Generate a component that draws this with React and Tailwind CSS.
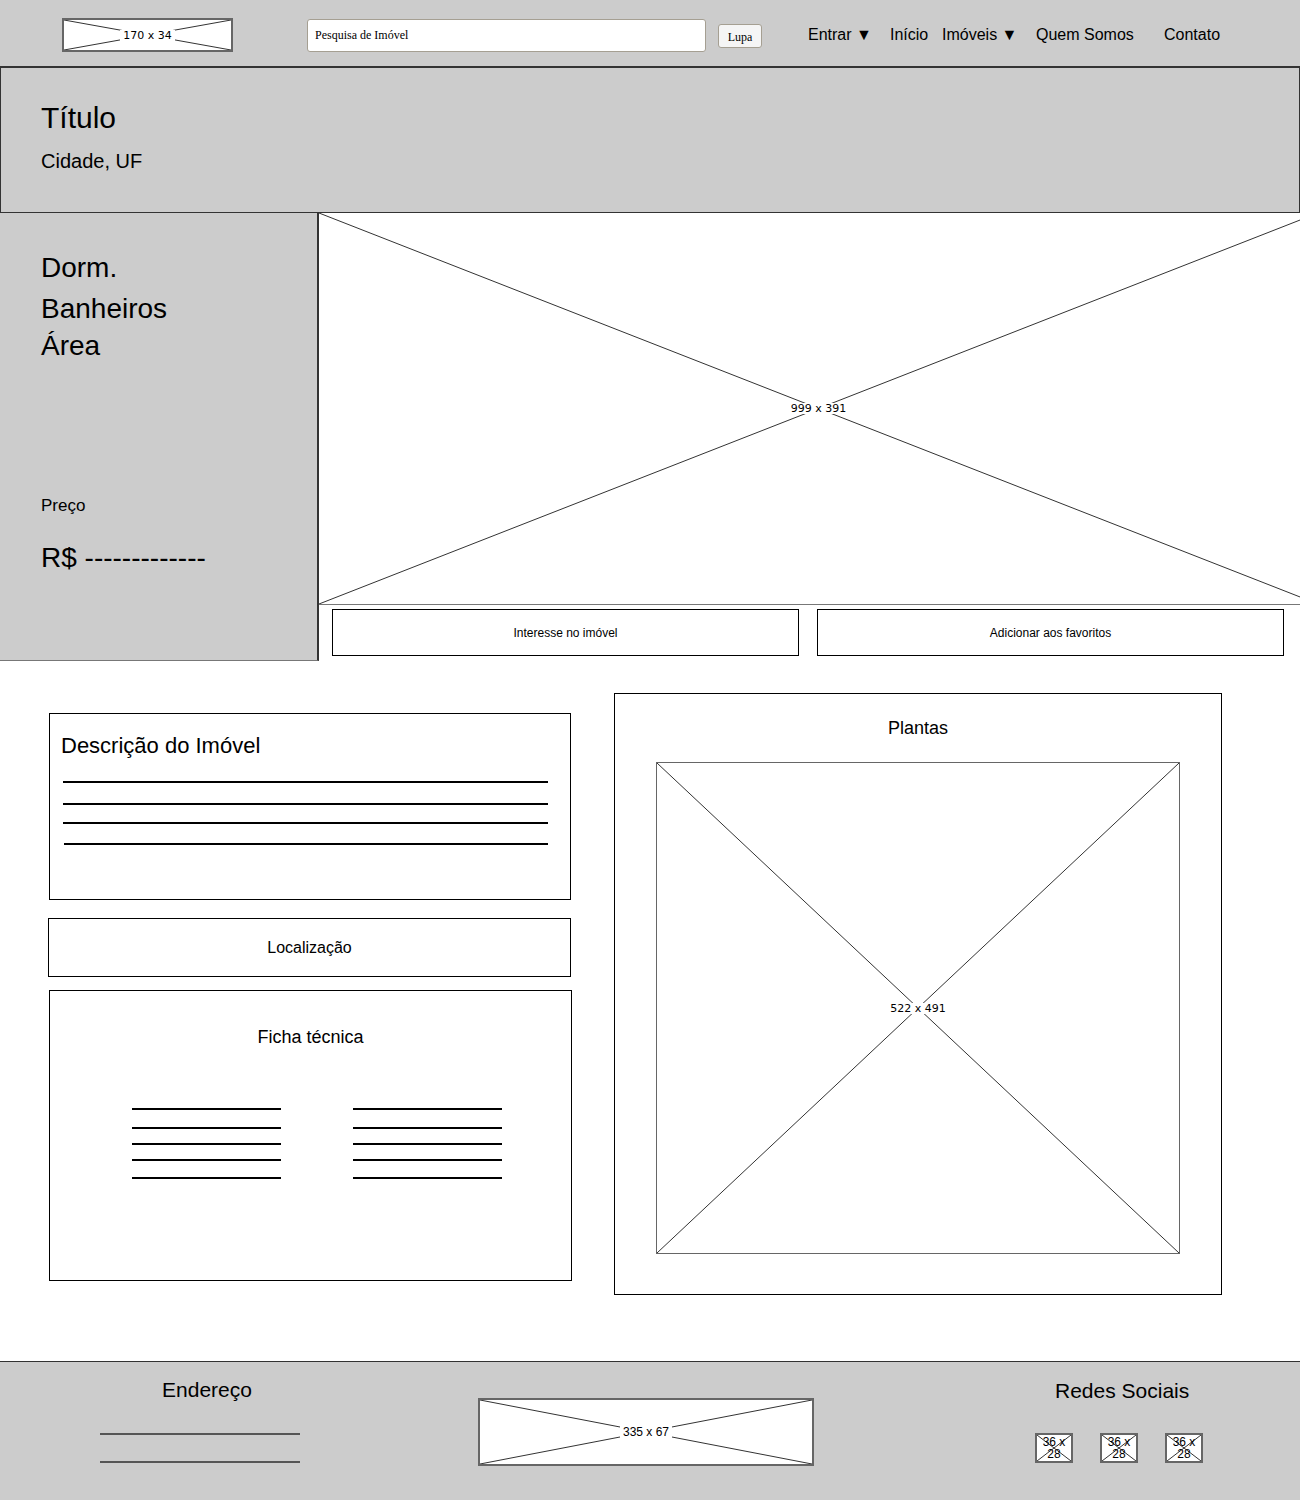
import React from 'react';

const Placeholder = ({ label, className = '', labelClass = 'text-[12px]', stroke = '#333' }) => (
  <div className={`relative bg-white ${className}`}>
    <svg className="absolute inset-0 h-full w-full">
      <line x1="0" y1="0" x2="100%" y2="100%" stroke={stroke} strokeWidth="1" />
      <line x1="100%" y1="0" x2="0" y2="100%" stroke={stroke} strokeWidth="1" />
    </svg>
    <div className="absolute inset-0 flex items-center justify-center">
      <span className={`bg-white px-[3px] leading-none text-black ${labelClass}`}>{label}</span>
    </div>
  </div>
);

const Rule = ({ className = '' }) => <div className={`h-[2px] bg-black ${className}`} />;

const App = () => {
  const font = { fontFamily: '"Liberation Sans", Arial, sans-serif' };

  return (
    <div className="w-[1300px] h-[1500px] bg-white text-black overflow-hidden" style={font}>
      {/* Header */}
      <header className="h-[68px] bg-[#cccccc] border-b-2 border-[#333] flex items-center pt-[4px]">
        <Placeholder
          label="170 x 34"
          className="ml-[62px] w-[171px] h-[34px] border-2 border-[#666]"
          labelClass="text-[11px] font-['DejaVu_Sans']"
        />
        <input
          readOnly
          placeholder="Pesquisa de Imóvel"
          className="ml-[74px] w-[399px] h-[33px] bg-white border border-[#a59f92] rounded-[3px] pl-[7px] text-[12px] placeholder:text-black outline-none"
          style={{ fontFamily: '"Liberation Serif", "Times New Roman", serif' }}
        />
        <button
          className="ml-[12px] mt-[2px] w-[44px] h-[24px] bg-[#f5f5f5] border border-[#a59f92] rounded-[3px] text-[12px] pt-[2px]"
          style={{ fontFamily: '"Liberation Serif", "Times New Roman", serif' }}
        >
          Lupa
        </button>
        <nav className="ml-[46px] flex items-center text-[16px]">
          <span className="w-[82px]">Entrar ▼</span>
          <span className="w-[52px]">Início</span>
          <span className="w-[94px]">Imóveis ▼</span>
          <span className="w-[128px]">Quem Somos</span>
          <span>Contato</span>
        </nav>
      </header>

      {/* Title */}
      <section className="h-[145px] bg-[#cccccc] border-x border-b border-[#333] pl-[40px] pt-[32px]">
        <h1 className="text-[30px] leading-[36px]">Título</h1>
        <p className="mt-[13px] text-[20px] leading-[24px]">Cidade, UF</p>
      </section>

      {/* Main */}
      <section className="flex h-[448px]">
        <aside className="w-[319px] shrink-0 bg-[#cccccc] border-r-2 border-b border-r-[#333] border-b-[#777] pl-[41px] pt-[39px] flex flex-col">
          <div className="text-[28px] leading-[32px]">Dorm.</div>
          <div className="mt-[9px] text-[28px] leading-[32px]">Banheiros</div>
          <div className="mt-[5px] text-[28px] leading-[32px]">Área</div>
          <div className="mt-[134px] text-[17px] leading-[20px]">Preço</div>
          <div className="mt-[26px] text-[28px] leading-[32px]">R$ -------------</div>
        </aside>
        <div className="flex-1 flex flex-col overflow-hidden">
          <Placeholder
            label="999 x 391"
            className="w-[999px] shrink-0 h-[392px] border-b border-[#777]"
            labelClass="text-[11px] font-['DejaVu_Sans']"
          />
          <div className="mt-[4px] ml-[13px] flex gap-[18px]">
            <button className="w-[467px] h-[47px] border border-black bg-white text-[12px]">
              Interesse no imóvel
            </button>
            <button className="w-[467px] h-[47px] border border-black bg-white text-[12px]">
              Adicionar aos favoritos
            </button>
          </div>
        </div>
      </section>

      {/* Details */}
      <section className="h-[700px] flex items-start">
        <div className="ml-[48px] w-[524px] flex flex-col">
          <div className="mt-[52px] ml-[1px] w-[522px] h-[187px] border border-black pl-[11px] pt-[19px]">
            <h2 className="text-[22px] leading-[26px]">Descrição do Imóvel</h2>
            <div className="pl-[2px] w-[487px]">
              <Rule className="mt-[22px]" />
              <Rule className="mt-[20px]" />
              <Rule className="mt-[17px]" />
              <Rule className="mt-[19px] ml-[1px]" />
            </div>
          </div>
          <div className="mt-[18px] w-[523px] h-[59px] border border-black flex items-center justify-center text-[16px]">
            Localização
          </div>
          <div className="mt-[13px] ml-[1px] w-[523px] h-[291px] border border-black pt-[35px]">
            <h3 className="text-center text-[18px] leading-[22px]">Ficha técnica</h3>
            <div className="mt-[60px] ml-[82px] flex gap-[72px]">
              {[0, 1].map((c) => (
                <div key={c} className="w-[149px]">
                  <Rule />
                  <Rule className="mt-[17px]" />
                  <Rule className="mt-[14px]" />
                  <Rule className="mt-[14px]" />
                  <Rule className="mt-[16px]" />
                </div>
              ))}
            </div>
          </div>
        </div>
        <div className="mt-[32px] ml-[42px] w-[608px] h-[602px] border border-black pt-[23px]">
          <h3 className="text-center text-[18px] leading-[22px]">Plantas</h3>
          <Placeholder
            label="522 x 491"
            className="mt-[23px] ml-[41px] w-[524px] h-[492px] border border-[#666]"
            labelClass="text-[11px] font-['DejaVu_Sans']"
          />
        </div>
      </section>

      {/* Footer */}
      <footer className="h-[140px] bg-[#cccccc] border-t border-[#333] flex items-start">
        <div className="ml-[100px] w-[200px] pt-[16px]">
          <div className="pl-[14px] text-center text-[21px] leading-[24px]">Endereço</div>
          <div className="mt-[31px] h-[2px] bg-[#555]" />
          <div className="mt-[26px] h-[2px] bg-[#555]" />
        </div>
        <Placeholder
          label="335 x 67"
          className="mt-[36px] ml-[178px] w-[336px] h-[68px] border-2 border-[#666]"
          labelClass="text-[12px]"
        />
        <div className="ml-[221px] pt-[17px] w-[170px]">
          <div className="pl-[20px] text-[21px] leading-[24px]">Redes Sociais</div>
          <div className="mt-[30px] flex gap-[27px]">
            {[0, 1, 2].map((i) => (
              <Placeholder
                key={i}
                label="36 x 28"
                className="w-[38px] h-[30px] border-2 border-[#666]"
                labelClass="text-[12px] w-[34px] !px-0 text-center leading-[13px] !bg-transparent"
              />
            ))}
          </div>
        </div>
      </footer>
    </div>
  );
};

export default App;
